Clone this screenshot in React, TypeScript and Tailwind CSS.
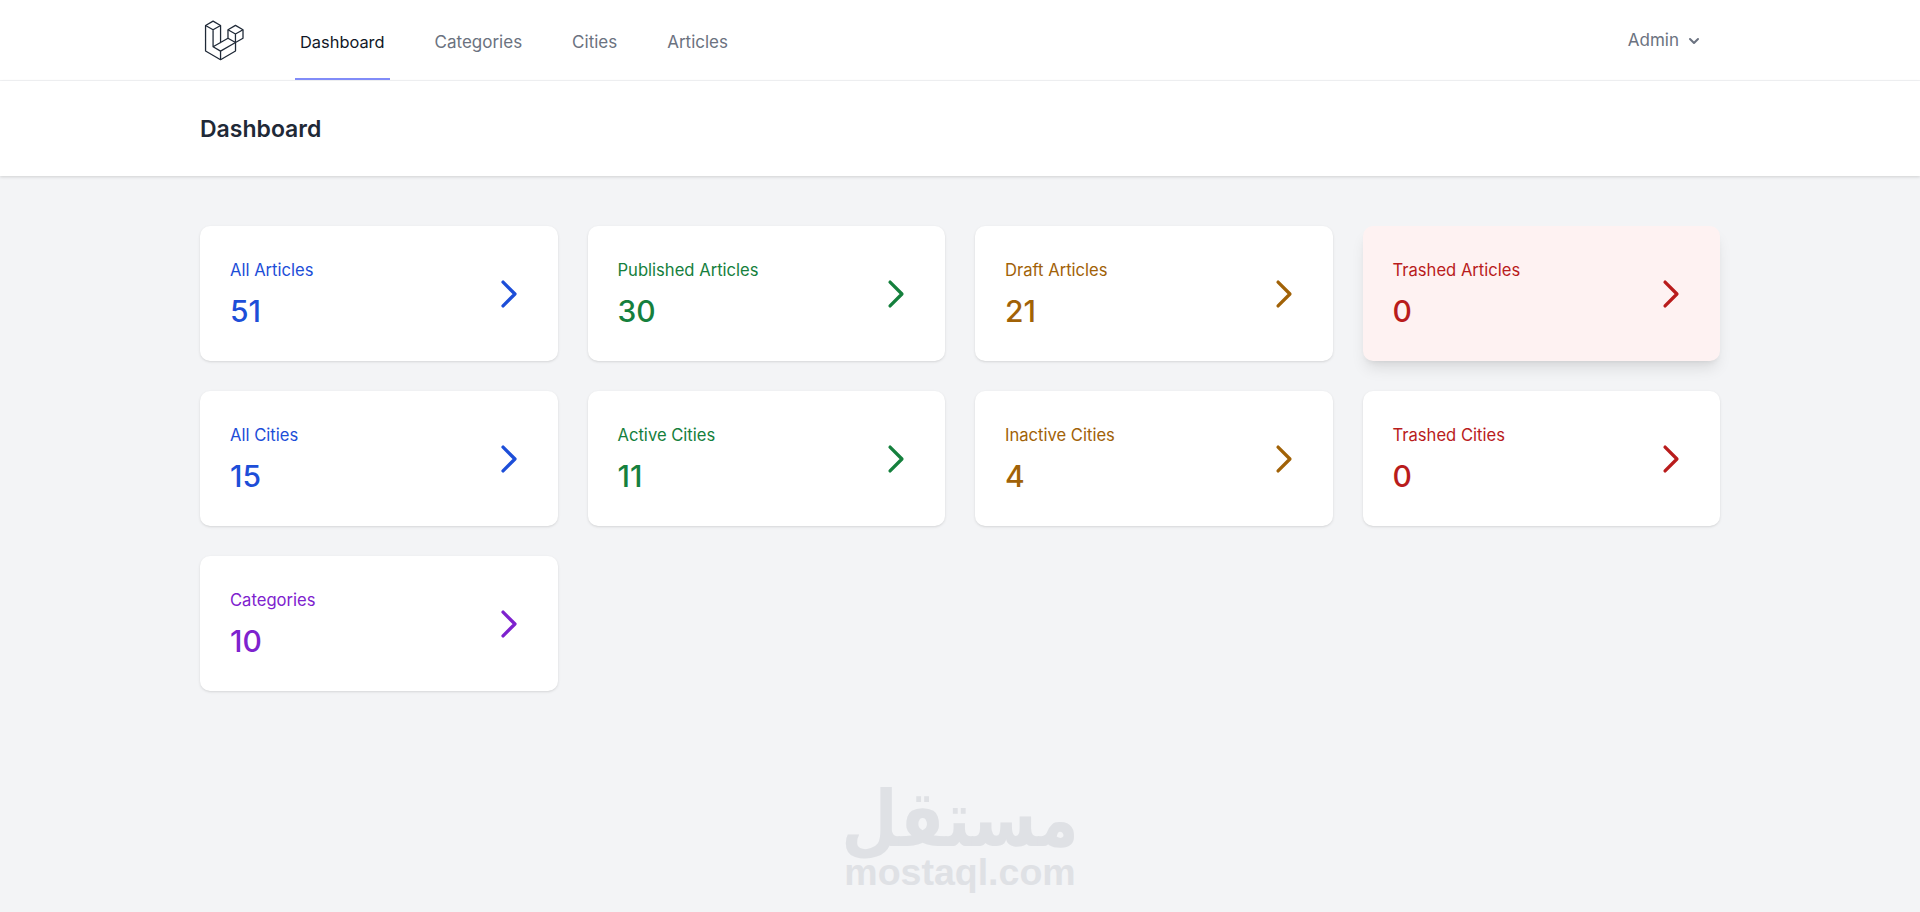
const cards = [
  { label: "All Articles", value: "51", color: "text-[#1d4ed8]" },
  { label: "Published Articles", value: "30", color: "text-[#15803d]" },
  { label: "Draft Articles", value: "21", color: "text-[#a16207]" },
  { label: "Trashed Articles", value: "0", color: "text-[#b91c1c]", hover: true },
  { label: "All Cities", value: "15", color: "text-[#1d4ed8]" },
  { label: "Active Cities", value: "11", color: "text-[#15803d]" },
  { label: "Inactive Cities", value: "4", color: "text-[#a16207]" },
  { label: "Trashed Cities", value: "0", color: "text-[#b91c1c]" },
  { label: "Categories", value: "10", color: "text-[#7e22ce]" },
];

function Logo() {
  return (
    <svg viewBox="0 0 316 316" className="h-[45px] w-[45px] shrink-0 text-[#1f2937]" fill="none" stroke="currentColor" strokeWidth="9" strokeLinejoin="round">
      <path d="M39 52.6 91.8 22.3l52.6 30.3V172l52.1-30V82.3L249 52l53 30.3V142l-52.6 30.4v59.8l-105.1 60.6L39 232.2z" />
      <path d="M39 52.6l52.8 30.3 52.6-30.3M91.8 82.9v119.4l52.5 30.3 105.1-60.2M144.3 232.6v60.2M91.8 202.3l52.6-30.3M196.5 82.3l52.5 30.3 53-30.3M249 112.6v59.8M196.5 142l52.9 30.4" />
    </svg>
  );
}

function Chevron() {
  return (
    <svg viewBox="0 0 24 24" className="h-[38px] w-[38px] shrink-0" fill="none" stroke="currentColor" strokeWidth="2.1" strokeLinecap="round" strokeLinejoin="round">
      <path d="M8.25 4.5l7.5 7.5-7.5 7.5" />
    </svg>
  );
}

export default function App() {
  return (
    <div className="relative min-h-screen overflow-hidden bg-[#f3f4f6] font-['Inter',sans-serif]">
      <nav className="border-b border-[#f3f4f6] bg-white">
        <div className="flex h-20 items-stretch justify-between px-[200px]">
          <div className="flex items-stretch">
            <div className="flex items-center">
              <Logo />
            </div>
            <div className="ml-[50px] flex items-stretch gap-[40px] text-[17px] text-[#6b7280]">
              <a className="flex items-center border-b-2 border-[#818cf8] px-[5px] pt-[6px] text-[16.4px] text-[#111827]">Dashboard</a>
              <a className="flex items-center px-[5px] pt-[6px]">Categories</a>
              <a className="flex items-center px-[5px] pt-[6px]">Cities</a>
              <a className="flex items-center px-[5px] pt-[6px]">Articles</a>
            </div>
          </div>
          <div className="flex items-center gap-[5px] pr-[16px] pt-[2px] text-[17px] text-[#6b7280]">
            <span>Admin</span>
            <svg viewBox="0 0 20 20" className="h-5 w-5" fill="currentColor">
              <path fillRule="evenodd" clipRule="evenodd" d="M5.293 7.293a1 1 0 011.414 0L10 10.586l3.293-3.293a1 1 0 111.414 1.414l-4 4a1 1 0 01-1.414 0l-4-4a1 1 0 010-1.414z" />
            </svg>
          </div>
        </div>
      </nav>

      <header className="flex h-[95px] items-center bg-white px-[200px] pt-[2px] shadow-[0_1px_3px_0_rgba(0,0,0,0.15)]">
        <h2 className="text-[23px] font-semibold text-[#1f2937]">Dashboard</h2>
      </header>

      <main className="grid grid-cols-4 gap-[30px] px-[200px] pt-[50px]">
        {cards.map((card) => (
          <div
            key={card.label}
            className={`flex h-[135px] items-center justify-between rounded-[10px] px-[30px] ${card.color} ${
              card.hover
                ? "bg-[#fef2f2] shadow-[0_10px_15px_-3px_rgba(0,0,0,0.1),0_4px_6px_-4px_rgba(0,0,0,0.1)]"
                : "bg-white shadow-[0_1px_3px_0_rgba(0,0,0,0.1),0_1px_2px_-1px_rgba(0,0,0,0.1)]"
            }`}
          >
            <div className="flex flex-col">
              <span className="text-[16.6px] leading-6">{card.label}</span>
              <span className="mt-[11px] text-[30px] font-[550] leading-9">{card.value}</span>
            </div>
            <Chevron />
          </div>
        ))}
      </main>

      <div className="absolute bottom-[25px] left-[845px] flex w-[230px] flex-col items-center text-[#dfe1e5]">
        <span className="origin-bottom scale-y-[1.2] font-['DejaVu_Sans',sans-serif] text-[65px] font-bold leading-[44px]">مستقل</span>
        <span className="mt-[11px] font-['Liberation_Sans',sans-serif] text-[37.5px] font-bold leading-[30px]">mostaql.com</span>
      </div>
    </div>
  );
}
